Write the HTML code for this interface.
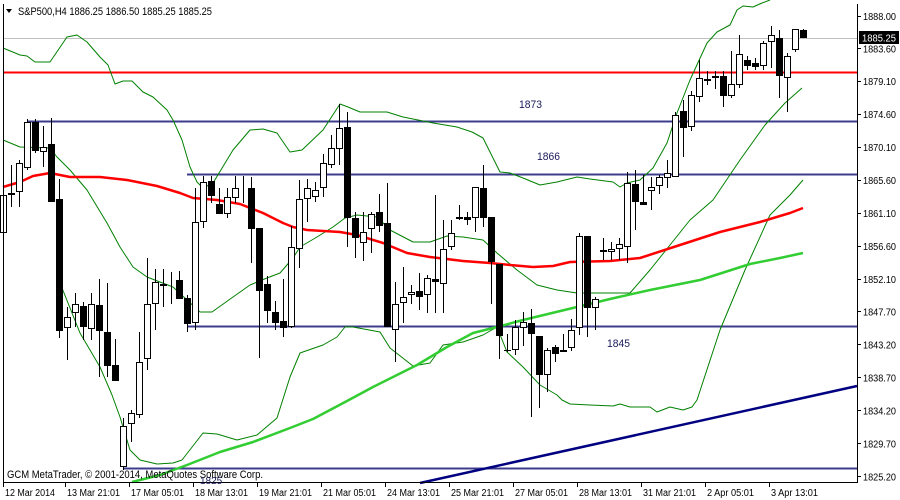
<!DOCTYPE html>
<html><head><meta charset="utf-8"><style>
html,body{margin:0;padding:0;background:#fff;}
svg{display:block;font-family:"Liberation Sans",sans-serif;}
</style></head><body>
<svg id="c" width="900" height="500" xmlns="http://www.w3.org/2000/svg">
<rect width="900" height="500" fill="#fff"/>
<g id="lines"></g>
<g id="candles"></g>
<line x1="3.5" y1="4" x2="3.5" y2="482.5" stroke="#000"/>
<line x1="3" y1="482.5" x2="858" y2="482.5" stroke="#000"/>
<line x1="857.5" y1="4" x2="857.5" y2="483" stroke="#000"/>
<g id="axis" font-size="10" fill="#000"></g>
<text x="18" y="15" font-size="11" textLength="194" lengthAdjust="spacingAndGlyphs">S&amp;P500,H4  1886.25 1886.50 1885.25 1885.25</text>
<path d="M6 9 L12 9 L9 13 Z" fill="#000"/>
<text x="519" y="108" font-size="11" fill="#1a1a5a" textLength="23" lengthAdjust="spacingAndGlyphs">1873</text>
<text x="537" y="160" font-size="11" fill="#1a1a5a" textLength="23" lengthAdjust="spacingAndGlyphs">1866</text>
<text x="607" y="347" font-size="11" fill="#1a1a5a" textLength="23" lengthAdjust="spacingAndGlyphs">1845</text>
<text x="7" y="478" font-size="11" fill="#000" textLength="256" lengthAdjust="spacingAndGlyphs">GCM MetaTrader, © 2001-2014, MetaQuotes Software Corp.</text>
<text x="200" y="484" font-size="10" fill="#1a1a5a">1825</text>
<rect x="859" y="31" width="40" height="13" fill="#000"/>
<text x="862" y="41.5" font-size="10" fill="#fff" textLength="34" lengthAdjust="spacingAndGlyphs">1885.25</text>
</svg>
<script>
var NS="http://www.w3.org/2000/svg";
function el(p,t,a){var e=document.createElementNS(NS,t);for(var k in a)e.setAttribute(k,a[k]);document.getElementById(p).appendChild(e);return e;}
function pl(p,pts,col,w){el(p,"polyline",{points:pts.map(function(q){return q.join(",")}).join(" "),fill:"none",stroke:col,"stroke-width":w,"stroke-linejoin":"round"});}
el("lines","line",{x1:4,y1:38.5,x2:857,y2:38.5,stroke:"#c0c0c0"});
el("lines","line",{x1:4,y1:72.5,x2:857,y2:72.5,stroke:"#ff0000","stroke-width":2});
el("lines","line",{x1:27,y1:121.5,x2:857,y2:121.5,stroke:"#3c3c8c","stroke-width":2});
el("lines","line",{x1:187,y1:174.5,x2:857,y2:174.5,stroke:"#3c3c8c","stroke-width":2});
el("lines","line",{x1:187,y1:326.5,x2:857,y2:326.5,stroke:"#3c3c8c","stroke-width":2});
el("lines","line",{x1:123,y1:468.5,x2:857,y2:468.5,stroke:"#3c3c8c","stroke-width":2});
el("lines","line",{x1:420,y1:483,x2:857,y2:386,stroke:"#000080","stroke-width":2.5});
var G="#008000";
pl("lines",[[3,48],[20,55],[27,56],[35,62],[50,62],[67,37],[77,35],[87,42],[100,57],[108,65],[115,84],[123,81],[132,81],[143,92],[153,97],[167,110],[173,120],[182,140],[190,167],[197,182],[203,188],[213,183],[233,150],[250,130],[263,129],[277,133],[290,152],[302,150],[323,130],[340,104],[348,107],[360,112],[387,112],[403,117],[423,121],[433,123],[457,127],[472,132],[483,138],[500,172],[510,173],[523,178],[540,185],[557,182],[577,177],[590,179],[613,182],[620,187],[627,183],[640,180],[653,168],[667,143],[677,113],[690,80],[707,43],[717,32],[730,25],[737,10],[743,6],[753,7],[762,3],[770,0]],G,1);
pl("lines",[[3,140],[20,147],[50,148],[57,157],[70,170],[87,190],[107,223],[120,247],[133,267],[147,277],[173,287],[200,312],[212,312],[233,297],[250,285],[267,278],[280,273],[293,258],[300,247],[317,237],[333,227],[345,218],[357,215],[377,217],[390,230],[413,242],[430,242],[447,236],[463,237],[483,240],[497,253],[517,270],[537,285],[557,290],[577,293],[613,293],[630,293],[650,270],[670,245],[690,220],[713,200],[740,160],[765,125],[785,103],[802,88]],G,1);
pl("lines",[[62,288],[80,333],[100,367],[112,395],[120,417],[130,450],[140,460],[157,464],[173,463],[182,460],[203,433],[217,434],[237,440],[257,435],[277,418],[290,377],[300,353],[323,345],[337,337],[345,327],[353,327],[380,332],[390,348],[413,366],[430,363],[443,345],[463,342],[483,335],[497,327],[507,352],[523,367],[540,385],[557,395],[562,400],[570,404],[590,405],[613,406],[620,404],[630,407],[650,407],[657,412],[670,407],[683,410],[692,407],[697,400],[720,330],[745,270],[770,215],[790,195],[803,180]],G,1);
pl("lines",[[3,187],[20,182],[33,176],[50,173],[70,177],[100,177],[127,180],[157,186],[180,193],[193,198],[217,200],[240,204],[263,213],[283,223],[293,227],[307,230],[340,232],[357,235],[383,243],[407,253],[430,257],[463,261],[490,263],[510,265],[533,267],[553,266],[570,262],[610,261],[640,258],[680,245],[720,232],[760,222],[790,213],[803,208]],"#ff0000",2.5);
pl("lines",[[132,482],[160,475],[187,465],[220,452],[253,442],[290,428],[313,419],[347,401],[373,387],[417,365],[447,347],[473,333],[497,327],[523,320],[577,307],[610,299],[650,290],[700,280],[750,264],[780,258],[803,253]],"#32cd32",2.5);
var C=[[3,195,233,190,272,0],[11,193,195,165,207,0],[19,163,192,160,207,0],[27,122,168,119,170,0],[35,122,151,119,153,1],[43,147,152,126,167,0],[51,144,202,118,202,1],[59,199,331,179,338,1],[67,317,328,307,360,0],[75,304,313,293,327,0],[83,306,327,302,340,1],[91,304,329,293,340,0],[99,305,331,279,377,1],[107,332,366,283,377,1],[115,365,381,339,381,1],[123,426,467,418,470,0],[131,413,424,410,442,0],[139,362,415,332,418,0],[147,304,359,258,370,0],[155,282,304,269,330,0],[163,284,286,269,307,1],[171,282,283,272,304,0],[179,280,299,271,299,1],[187,298,324,295,332,1],[195,222,323,188,330,0],[203,182,222,176,228,0],[211,181,196,176,203,1],[219,204,214,188,214,1],[227,197,214,188,218,0],[235,188,198,176,203,0],[243,189,190,176,203,0],[251,188,229,177,263,1],[259,228,291,228,358,1],[267,284,311,276,323,1],[275,312,323,301,330,1],[283,321,328,279,337,1],[291,247,327,226,328,0],[299,199,249,180,268,0],[307,188,199,179,222,0],[315,190,197,182,202,0],[323,163,188,154,197,0],[331,148,165,135,168,0],[339,128,149,104,165,0],[347,127,218,112,247,1],[355,218,238,212,258,1],[363,232,243,212,261,0],[371,214,229,212,253,0],[379,212,226,194,232,1],[387,223,327,183,327,1],[395,304,330,282,362,0],[403,297,303,267,323,0],[411,292,295,285,304,0],[419,291,297,273,310,1],[427,278,295,275,313,0],[435,279,282,195,313,1],[443,249,284,220,313,0],[451,233,247,220,250,0],[459,217,219,205,220,0],[467,217,220,212,225,1],[475,187,218,187,232,0],[483,188,218,165,227,1],[491,217,262,217,304,1],[499,264,336,264,359,1],[507,350,351,334,352,1],[515,327,350,320,355,0],[523,322,328,312,346,0],[531,323,334,309,417,1],[539,336,375,336,408,1],[547,350,375,348,392,0],[555,347,354,345,362,1],[563,350,352,334,352,0],[571,330,348,319,351,0],[579,236,328,233,335,0],[587,236,308,236,337,1],[595,299,308,297,330,0],[603,250,252,238,260,0],[611,249,252,242,260,0],[619,244,249,238,260,0],[627,183,247,172,263,0],[635,184,202,170,230,1],[643,202,205,175,205,1],[651,187,191,177,210,0],[659,177,186,175,194,0],[667,173,178,160,188,0],[675,115,177,112,177,0],[683,111,128,100,157,1],[691,95,127,91,131,0],[699,78,97,60,102,0],[707,79,81,71,85,0],[715,76,78,71,89,0],[723,76,96,71,107,1],[731,84,96,51,98,0],[739,54,85,35,88,0],[747,60,66,56,70,1],[755,63,67,58,70,1],[763,43,66,41,70,0],[771,35,42,26,68,0],[779,38,76,30,98,1],[787,56,78,53,112,0],[795,29,50,29,52,0],[803,30,38,29,38,1]];
C.forEach(function(c){var x=c[0];
el("candles","line",{x1:x+.5,y1:c[3],x2:x+.5,y2:c[4],stroke:"#000"});
var h=Math.max(1,c[2]-c[1]);
if(c[5])el("candles","rect",{x:x-3,y:c[1],width:7,height:h,fill:"#000"});
else el("candles","rect",{x:x-2.5,y:c[1]+.5,width:6,height:Math.max(0,h-1),fill:"#fff",stroke:"#000"});
});
var P=["1888.00","1883.60","1879.10","1874.60","1870.10","1865.60","1861.10","1856.60","1852.10","1847.70","1843.20","1838.70","1834.20","1829.70","1825.20"];
P.forEach(function(p){var y=16+(1888-parseFloat(p))*7.33;
el("axis","line",{x1:857,y1:Math.round(y)+.5,x2:861,y2:Math.round(y)+.5,stroke:"#000"});
var t=el("axis","text",{x:863,y:y+4,textLength:33,lengthAdjust:"spacingAndGlyphs"});t.textContent=p;});
var T=[["12 Mar 2014",4,50],["13 Mar 21:01",66,53],["17 Mar 05:01",130,53],["18 Mar 13:01",194,53],["19 Mar 21:01",258,53],["21 Mar 05:01",322,53],["24 Mar 13:01",386,53],["25 Mar 21:01",450,53],["27 Mar 05:01",514,53],["28 Mar 13:01",578,53],["31 Mar 21:01",642,53],["2 Apr 05:01",706,47],["3 Apr 13:01",770,47]];
T.forEach(function(a){el("axis","line",{x1:a[1]-0.5,y1:482,x2:a[1]-0.5,y2:487,stroke:"#000"});
var t=el("axis","text",{x:a[1]+1,y:496,textLength:a[2],lengthAdjust:"spacingAndGlyphs"});t.textContent=a[0];});
</script>
</body></html>
